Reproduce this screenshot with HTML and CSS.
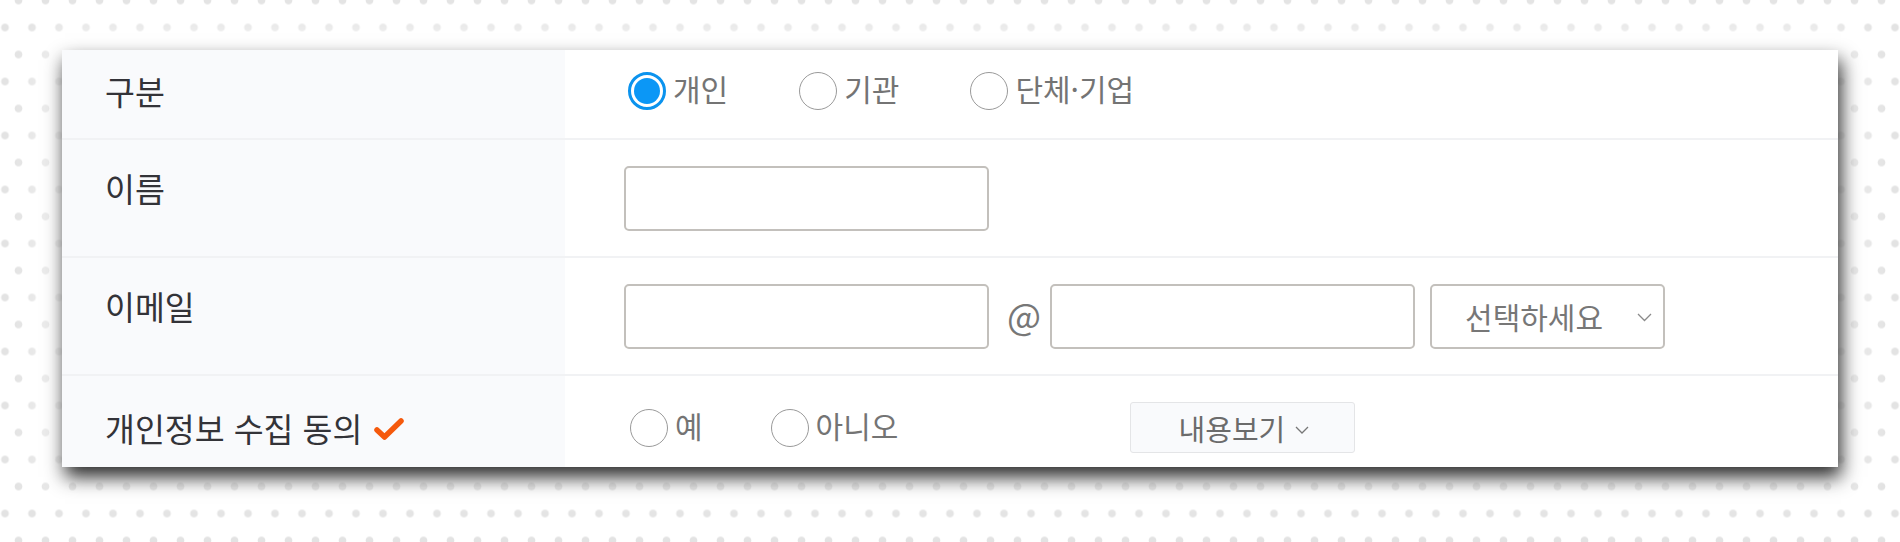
FILE: index.html
```html
<!DOCTYPE html>
<html lang="ko">
<head>
<meta charset="utf-8">
<title>신청서</title>
<link rel="stylesheet" href="styles.css">
</head>
<body>
<div class="stage">
  <div class="card">
    <div class="row row-first">
      <div class="label">구분</div>
      <div class="value">
        <span class="radio"><span class="circle on"></span><span class="rtext">개인</span></span>
        <span class="radio"><span class="circle"></span><span class="rtext">기관</span></span>
        <span class="radio"><span class="circle"></span><span class="rtext">단체·기업</span></span>
      </div>
    </div>
    <div class="row row-mid">
      <div class="label">이름</div>
      <div class="value">
        <span class="input"></span>
      </div>
    </div>
    <div class="row row-mid">
      <div class="label">이메일</div>
      <div class="value">
        <span class="input"></span>
        <span class="at">@</span>
        <span class="input"></span>
        <span class="select">선택하세요<svg class="chev" width="15" height="9" viewBox="0 0 15 9"><polyline points="1,1 7.5,7.5 14,1" fill="none" stroke="#8a8a8a" stroke-width="1.3"/></svg></span>
      </div>
    </div>
    <div class="row row-last">
      <div class="label">개인정보 수집 동의<svg class="check" width="30" height="24" viewBox="0 0 30 24"><path d="M3 13 L10.5 20 L27 4" fill="none" stroke="#f5590c" stroke-width="5.5" stroke-linecap="round" stroke-linejoin="round"/></svg></div>
      <div class="value">
        <span class="radio"><span class="circle"></span><span class="rtext">예</span></span>
        <span class="radio"><span class="circle"></span><span class="rtext">아니오</span></span>
        <span class="btn">내용보기<svg class="chev-s" width="14" height="8" viewBox="0 0 14 8"><polyline points="1,1 7,7 13,1" fill="none" stroke="#777" stroke-width="1.3"/></svg></span>
      </div>
    </div>
  </div>
</div>
</body>
</html>
```

FILE: styles.css
```css
html, body {
  margin: 0;
  padding: 0;
}

body {
  width: 1900px;
  height: 542px;
  overflow: hidden;
  background-color: #ffffff;
  background-image:
    radial-gradient(circle at center, #e3e3e3 0, #e3e3e3 3.4px, rgba(227,227,227,0) 4.3px),
    radial-gradient(circle at center, #e3e3e3 0, #e3e3e3 3.4px, rgba(227,227,227,0) 4.3px);
  background-size: 27px 54px, 27px 54px;
  background-position: -8.5px 0.5px, 5px -26.5px;
  font-family: "Noto Sans CJK KR", "Noto Sans", sans-serif;
}

.stage {
  padding: 50px 62px 0 62px;
}

.card {
  background: #ffffff;
  box-shadow:
    3px 10px 18px rgba(0, 0, 0, 0.84),
    0 0 44px 14px rgba(255, 255, 255, 0.8);
}

.row {
  display: flex;
  border-bottom: 2px solid #f1f2f4;
}

.row-first { height: 88px; }
.row-mid { height: 116px; }
.row-last { height: 91px; border-bottom: none; }

.label {
  width: 503px;
  box-sizing: border-box;
  padding-left: 43px;
  background: #f9fafc;
  display: flex;
  align-items: center;
  font-size: 32.5px;
  color: #333338;
}

.row-first .label { padding-bottom: 8px; }
.row-mid .label { padding-bottom: 22px; }
.row-last .label { padding-top: 12px; }

.value {
  flex: 1;
  display: flex;
  align-items: center;
  padding-left: 59px;
}

.row-first .value { padding-bottom: 6px; padding-left: 63px; }
.row-last .value { padding-top: 12px; padding-left: 65px; }

.radio {
  display: flex;
  align-items: center;
  margin-right: 71px;
}

.circle {
  width: 38px;
  height: 38px;
  box-sizing: border-box;
  border: 1.6px solid #9a9a9a;
  border-radius: 50%;
  background: #ffffff;
  position: relative;
  flex: none;
}

.circle.on {
  border: 3px solid #0b93ee;
}

.circle.on::after {
  content: "";
  position: absolute;
  left: 3px;
  top: 3px;
  right: 3px;
  bottom: 3px;
  border-radius: 50%;
  background: #0b97f6;
}

.rtext {
  margin-left: 7px;
  font-size: 30px;
  color: #747474;
  line-height: 1;
  padding-bottom: 6px;
}

.row-last .radio { margin-right: 68px; }

.input {
  width: 365px;
  height: 65px;
  box-sizing: border-box;
  border: 2px solid #c3c0bc;
  border-radius: 5px;
  background: #ffffff;
}

.at {
  font-size: 36px;
  color: #777777;
  margin: 0 9px 0 18px;
  padding-bottom: 5px;
}

.select {
  margin-left: 15px;
  width: 235px;
  height: 65px;
  box-sizing: border-box;
  border: 2px solid #c3c0bc;
  border-radius: 5px;
  display: flex;
  align-items: center;
  padding-left: 33px;
  font-size: 30px;
  color: #777777;
}

.chev {
  margin-left: 34px;
  margin-top: 2px;
}

.check {
  margin-left: 12px;
  margin-top: 2px;
}

.btn {
  margin-left: 164px;
  width: 225px;
  height: 51px;
  box-sizing: border-box;
  border: 1.5px solid #e4e5e7;
  border-radius: 3px;
  background: #f9fafc;
  display: flex;
  align-items: center;
  justify-content: center;
  font-size: 29px;
  color: #6b6b6b;
  padding-left: 2px;
}

.chev-s {
  margin-left: 10px;
  margin-top: 4px;
}
```
